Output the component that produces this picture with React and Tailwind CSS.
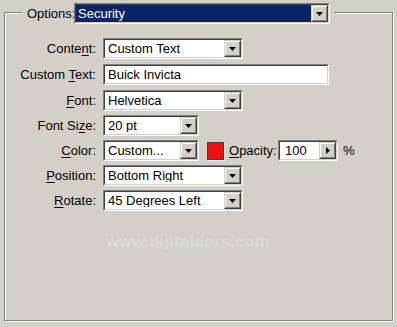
import React from "react";

function Sunken({ className = "", inner = "bg-white", children }) {
  return (
    <div className={`border border-t-[#808080] border-l-[#808080] border-b-white border-r-white ${className}`}>
      <div className={`h-full w-full border border-t-[#404040] border-l-[#404040] border-b-[#d4d0c8] border-r-[#d4d0c8] flex items-center ${inner}`}>
        {children}
      </div>
    </div>
  );
}

function Btn({ dir = "down" }) {
  return (
    <div className="h-full w-[17px] shrink-0 border border-t-[#d4d0c8] border-l-[#d4d0c8] border-b-[#404040] border-r-[#404040] bg-[#d4d0c8]">
      <div className="h-full w-full border border-t-white border-l-white border-b-[#808080] border-r-[#808080] flex items-center justify-center">
        {dir === "down" ? (
          <svg width="7" height="4" viewBox="0 0 7 4"><path d="M0 0h7L3.5 4z" fill="#000" /></svg>
        ) : (
          <svg width="4" height="7" viewBox="0 0 4 7"><path d="M0 0v7L4 3.5z" fill="#000" /></svg>
        )}
      </div>
    </div>
  );
}

function Select({ w, text }) {
  return (
    <Sunken className={`${w} h-[21px]`}>
      <span className="flex-1 pl-[3px] leading-none whitespace-nowrap overflow-hidden">{text}</span>
      <Btn />
    </Sunken>
  );
}

function Label({ children }) {
  return <div className="w-[91px] text-right pr-[1px] whitespace-nowrap">{children}</div>;
}

function U({ children }) {
  return <span className="underline underline-offset-2 decoration-1">{children}</span>;
}

export default function App() {
  return (
    <div
      className="w-[397px] h-[327px] bg-[#d4d0c8] text-[13px] text-black pt-[12px] pl-[4px]"
      style={{ fontFamily: '"Liberation Sans", Arial, sans-serif' }}
    >
      <div className="relative w-[389px] h-[309px] border border-[#808080] shadow-[inset_1px_1px_0_#fff,1px_1px_0_#fff] pt-[25px] pl-[1px]">
        <div className="absolute left-[17px] top-[-10px] h-[21px] flex items-center bg-[#d4d0c8] pl-[5px] pr-[4px]">
          <span className="mr-[2px] w-[45px]">Options:</span>
          <Sunken className="w-[256px] h-[21px]" inner="bg-[#0a246a]">
            <span className="flex-1 pl-[2px] text-white leading-none">Security</span>
            <Btn />
          </Sunken>
        </div>

        <div className="flex flex-col">
          <div className="flex items-center h-[21px]">
            <Label>Conte<U>n</U>t:</Label>
            <div className="ml-[6px]"><Select w="w-[140px]" text="Custom Text" /></div>
          </div>
          <div className="flex items-center h-[21px] mt-[5px]">
            <Label>Custom <U>T</U>ext:</Label>
            <div className="ml-[6px]">
              <Sunken className="w-[226px] h-[21px]">
                <span className="pl-[3px] leading-none">Buick Invicta</span>
              </Sunken>
            </div>
          </div>
          <div className="flex items-center h-[21px] mt-[5px]">
            <Label><U>F</U>ont:</Label>
            <div className="ml-[6px]"><Select w="w-[140px]" text="Helvetica" /></div>
          </div>
          <div className="flex items-center h-[21px] mt-[4px]">
            <Label>Font Si<U>z</U>e:</Label>
            <div className="ml-[6px]"><Select w="w-[96px]" text="20 pt" /></div>
          </div>
          <div className="flex items-center h-[21px] mt-[4px]">
            <Label><U>C</U>olor:</Label>
            <div className="ml-[6px]"><Select w="w-[96px]" text="Custom..." /></div>
            <div className="ml-[8px] w-[17px] h-[18px] border border-[#404040] shadow-[1px_1px_0_#fff] bg-[#ee1111]" />
            <span className="ml-[5px] w-[45px]"><U>O</U>pacity:</span>
            <div className="ml-[4px]">
              <Sunken className="w-[60px] h-[21px]">
                <span className="flex-1 pl-[5px] leading-none">100</span>
                <Btn dir="right" />
              </Sunken>
            </div>
            <span className="ml-[5px]">%</span>
          </div>
          <div className="flex items-center h-[21px] mt-[4px]">
            <Label><U>P</U>osition:</Label>
            <div className="ml-[6px]"><Select w="w-[140px]" text="Bottom Right" /></div>
          </div>
          <div className="flex items-center h-[21px] mt-[4px]">
            <Label><U>R</U>otate:</Label>
            <div className="ml-[6px]"><Select w="w-[140px]" text="45 Degrees Left" /></div>
          </div>
          <div className="mt-[23px] pl-[100px] text-[16px] font-bold text-[#dcd9d2] tracking-[0.5px] leading-none">
            www.dijitalders.com
          </div>
        </div>
      </div>
    </div>
  );
}
